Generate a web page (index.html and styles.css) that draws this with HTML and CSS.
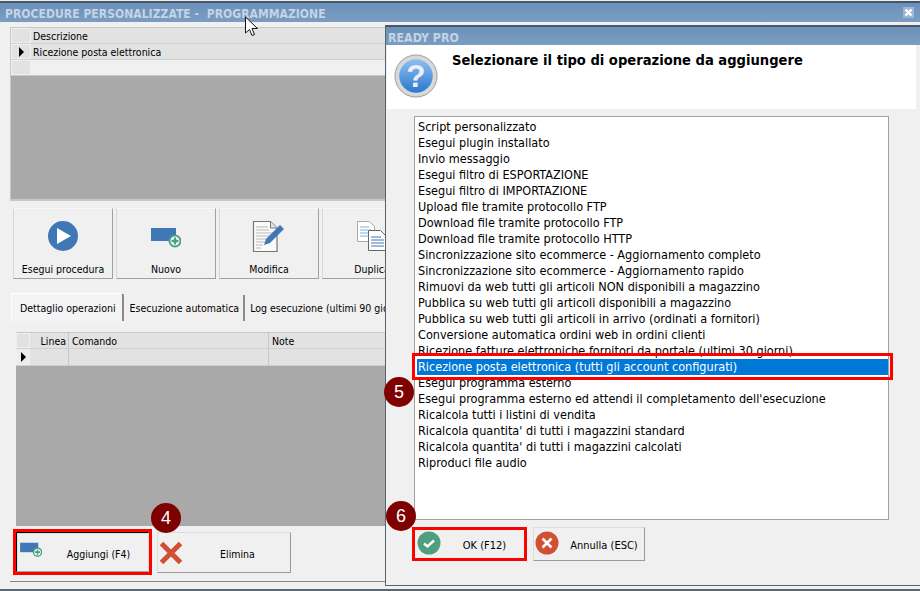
FILE: index.html
```html
<!DOCTYPE html>
<html lang="it">
<head>
<meta charset="utf-8">
<title>Procedure personalizzate</title>
<link rel="stylesheet" href="styles.css">
</head>
<body>
<svg width="0" height="0" class="defs">
  <defs>
    <symbol id="add" viewBox="0 0 30 22">
      <rect x="0" y="1" width="25" height="13" fill="#3f78b5"/>
      <circle cx="24" cy="14" r="5.500" fill="#fff" stroke="#4d9f85" stroke-width="2"/>
      <path d="M24 10.500v7M20.500 14h7" stroke="#4d9f85" stroke-width="2.400"/>
    </symbol>
  </defs>
</svg>
<main class="win">
  <header class="titlebar"><span>PROCEDURE PERSONALIZZATE -  PROGRAMMAZIONE</span><span class="close"><svg width="11" height="11" viewBox="0 0 11 11"><path d="M2.500 2.500l6 6M8.500 2.500l-6 6" stroke="#fff" stroke-width="2.400"/></svg></span></header>
  <div class="body">
    <section class="grid top">
      <div class="row head"><i class="sel"></i><span>Descrizione</span></div>
      <div class="row cur"><i class="sel"><b class="arrow"></b></i><span>Ricezione posta elettronica</span></div>
      <div class="row new"><i class="sel"></i></div>
    </section>
    <nav class="tools">
      <button class="tool">
        <svg width="46" height="46" viewBox="0 0 46 46"><circle cx="23" cy="23" r="15" fill="#3f78b5"/><path d="M17 15v16l14-8z" fill="#fff"/></svg>
        <span>Esegui procedura</span>
      </button>
      <button class="tool">
        <svg class="addicon" width="30" height="22"><use href="#add"/></svg>
        <span>Nuovo</span>
      </button>
      <button class="tool">
        <svg width="46" height="46" viewBox="0 0 46 46"><path d="M7.500 8.500h17l6.500 6.500v23.500H7.500z" fill="#fafafa" stroke="#777" stroke-width="1.200"/><path d="M24.500 8.500v6.500h6.500" fill="#e4e4e4" stroke="#777"/><path d="M10 14h12M10 17h13M10 20h17M10 23h15M10 26h12M10 29h9M10 32h7M10 35h5" stroke="#b8b8b8"/><path d="M18 32l2-6 14-14 4 4-14 14z" fill="#3f78b5"/></svg>
        <span>Modifica</span>
      </button>
      <button class="tool">
        <svg width="46" height="46" viewBox="0 0 46 46"><path d="M8.500 8.500h12l5 5v15h-17z" fill="#fff" stroke="#aaa"/><path d="M11 14h9M11 17h11M11 20h11M11 23h8" stroke="#7eb0e0"/><path d="M19.500 17.500h12l5 5v15h-17z" fill="#fff" stroke="#666"/><path d="M22 24h10M22 27h13M22 30h13M22 33h13" stroke="#3f78b5"/></svg>
        <span>Duplica</span>
      </button>
    </nav>
    <section class="tabs">
      <div class="tabstrip">
        <span class="tab on">Dettaglio operazioni</span>
        <span class="tab auto">Esecuzione automatica</span>
        <span class="tab log">Log esecuzione (ultimi 90 giorni)</span>
      </div>
      <div class="pane">
        <div class="grid lower">
          <div class="row head"><i class="sel"></i><span class="c1">Linea</span><span class="c2">Comando</span><span class="c3">Note</span></div>
          <div class="row blank"><i class="sel"><b class="arrow"></b></i><span class="c1"></span><span class="c2"></span><span></span></div>
        </div>
        <div class="actions">
          <button class="act hot"><svg class="smalladd" width="22" height="16"><use href="#add"/></svg><span>Aggiungi (F4)</span></button>
          <button class="act del"><svg width="26" height="26" viewBox="0 0 26 26"><path d="M3.500 3.500l19 19M22.500 3.500l-19 19" stroke="#d14f33" stroke-width="5"/></svg><span>Elimina</span></button>
        </div>
      </div>
    </section>
  </div>
</main>

<aside class="dialog">
  <header class="dtitle">READY PRO</header>
  <div class="dhead">
    <svg width="44" height="44" viewBox="0 0 46 46">
      <defs><linearGradient id="q" x1="0" y1="0" x2="0" y2="1"><stop offset="0" stop-color="#8cc0ee"/><stop offset="1" stop-color="#2a78cf"/></linearGradient></defs>
      <circle cx="23" cy="23" r="22" fill="#d8d8d8" stroke="#999"/>
      <circle cx="23" cy="23" r="17.500" fill="url(#q)"/>
      <text x="23" y="34" text-anchor="middle" class="qmark">?</text>
    </svg>
    <h1>Selezionare il tipo di operazione da aggiungere</h1>
  </div>
  <div class="dbody">
    <ul class="list">
      <li>Script personalizzato</li>
      <li>Esegui plugin installato</li>
      <li>Invio messaggio</li>
      <li>Esegui filtro di ESPORTAZIONE</li>
      <li>Esegui filtro di IMPORTAZIONE</li>
      <li>Upload file tramite protocollo FTP</li>
      <li>Download file tramite protocollo FTP</li>
      <li>Download file tramite protocollo HTTP</li>
      <li>Sincronizzazione sito ecommerce - Aggiornamento completo</li>
      <li>Sincronizzazione sito ecommerce - Aggiornamento rapido</li>
      <li>Rimuovi da web tutti gli articoli NON disponibili a magazzino</li>
      <li>Pubblica su web tutti gli articoli disponibili a magazzino</li>
      <li>Pubblica su web tutti gli articoli in arrivo (ordinati a fornitori)</li>
      <li>Conversione automatica ordini web in ordini clienti</li>
      <li>Ricezione fatture elettroniche fornitori da portale (ultimi 30 giorni)</li>
      <li class="picked">Ricezione posta elettronica (tutti gli account configurati)</li>
      <li>Esegui programma esterno</li>
      <li>Esegui programma esterno ed attendi il completamento dell'esecuzione</li>
      <li>Ricalcola tutti i listini di vendita</li>
      <li>Ricalcola quantita' di tutti i magazzini standard</li>
      <li>Ricalcola quantita' di tutti i magazzini calcolati</li>
      <li>Riproduci file audio</li>
    </ul>
    <div class="dactions">
      <button class="act ok"><svg width="24" height="24" viewBox="0 0 24 24"><circle cx="12" cy="12" r="11.500" fill="#4d9f7d"/><path d="M7 12.500l3.500 3L17 9.500" fill="none" stroke="#fff" stroke-width="2.400"/></svg><span>OK (F12)</span></button>
      <button class="act cancel"><svg width="24" height="24" viewBox="0 0 24 24"><circle cx="12" cy="12" r="11.500" fill="#d14f33"/><path d="M7.500 7.500l9 9M16.500 7.500l-9 9" stroke="#fff" stroke-width="2.600"/></svg><span>Annulla (ESC)</span></button>
    </div>
  </div>
</aside>

<div class="mark box-row"></div>
<div class="mark n4">4</div>
<div class="mark n5">5</div>
<div class="mark n6">6</div>
<svg class="mark cursor" width="16" height="22" viewBox="0 0 16 22"><path d="M1.500 1v16l4-3.500 2.500 6 2.500-1-2.500-6h5.500z" fill="#fff" stroke="#111"/></svg>
</body>
</html>
```
FILE: styles.css
```css
* { box-sizing: border-box; }
html, body { margin: 0; padding: 0; }
body {
  width: 920px; height: 591px; overflow: hidden; position: relative;
  font: 10.5px/16px "DejaVu Sans", "Noto Sans", sans-serif; font-stretch: condensed;
  color: #000; background: #f0f0f0;
}
.defs { position: absolute; }
button { font: inherit; font-stretch: inherit; color: inherit; padding: 0; }

.win { width: 920px; height: 591px; padding-top: 1px; border-bottom: 2px solid #5a6672; display: flex; flex-direction: column; }
.titlebar {
  height: 21px; flex: none; border-top: 2px solid #46566a;
  background: linear-gradient(#6b91b9, #7b9dc2);
  color: #c3d4e6; font-weight: bold; font-size: 12px; letter-spacing: .05px; line-height: 22px;
  padding: 0 4px 0 5px; display: flex; justify-content: space-between; white-space: pre;
}
.close { width: 11px; height: 11px; margin: 4px 2px 0 0; background: #9db7d2; display: flex; }
.body { flex: 1; padding: 5px 0 0 10px; width: 385px; overflow: hidden; }

.grid { background: #a9a9a9; }
.top { width: 500px; height: 174px; border: 1px solid #c8c8c8; border-width: 1px 0 2px 1px; }
.row { display: flex; height: 16px; line-height: 16px; }
.sel { width: 20px; flex: none; display: flex; align-items: center; justify-content: center; background: #e2e2e2; border: 1px solid #f0f0f0; }
.row.head, .row.cur { background: #e2e2e2; border-bottom: 1px solid #d0d0d0; }
.row span { padding-left: 2px; }
.row.new { background: #f0f0f0; border-bottom: 1px solid #c8c8c8; }
.arrow { width: 0; height: 0; border-left: 5px solid #000; border-top: 5px solid transparent; border-bottom: 5px solid transparent; }

.tools { display: flex; gap: 3px; margin: 7px 0 0 3px; width: 500px; }
.tool {
  width: 100px; height: 71px; flex: none; background: #f0f0f0; border: 1px solid; border-color: #f8f8f8 #a0a0a0 #a0a0a0 #d8d8d8;
  display: flex; flex-direction: column; align-items: center; justify-content: space-between; padding: 4px 0 1px;
}
.addicon { margin-top: 14px; }

.tabs { margin: 14px 0 0 1px; width: 500px; }
.tabstrip { display: flex; height: 28px; align-items: flex-end; white-space: nowrap; }
.tab { height: 26px; line-height: 26px; border-right: 2px solid #8a8a8a; }
.tab.on { height: 28px; line-height: 28px; padding: 0 6px 0 8px; background: #f4f4f4; border-top: 1px solid #fff; border-left: 1px solid #fff; border-radius: 3px 3px 0 0; }
.tab.auto { padding: 0 4px 0 6px; }
.tab.log { padding: 0 4px 0 5px; border: 0; }
.pane { margin-left: -1px; padding: 11px 0 0 6px; height: 261px; display: flex; flex-direction: column; border-bottom: 1px solid #808890; }
.lower { height: 194px; flex: none; border-top: 1px solid #c8c8c8; }
.lower .row { background: #e2e2e2; border-bottom: 1px solid #cfcfcf; }
.lower .blank { height: 17px; }
.lower .sel { width: 14px; }
.lower .c1 { width: 39px; text-align: right; padding-right: 2px; border-right: 1px solid #c8c8c8; }
.lower .c2 { width: 200px; padding-left: 3px; border-right: 1px solid #c8c8c8; }
.lower .c3 { padding-left: 3px; }
.lower .blank .sel { background: #ececec; }

.actions { display: flex; gap: 8px; margin-top: 6px; align-items: flex-start; }
.act {
  height: 41px; background: #f0f0f0; border: 1px solid; border-color: #dcdcdc #9a9a9a #9a9a9a #dcdcdc;
  display: flex; align-items: center; flex: none;
}
.act span { flex: 1; text-align: center; }
.hot { width: 133px; height: 40px; outline: 3px solid #f00; border-color: #000 #d8d8d8 #a0a0a0 #000; box-shadow: inset 1px 1px 0 #dcdcdc; }
.hot span { padding: 3px 0 0 7px; }
.smalladd { margin: -4px 0 0 3px; }
.del { width: 134px; }
.del span { padding: 2px 0 0 1px; }

.dialog {
  position: absolute; left: 385px; top: 25px; width: 535px; height: 561px;
  border: 1px solid #56626e; border-right: 0; border-top: 2px solid #46566a; background: #f0f0f0;
  display: flex; flex-direction: column;
}
.dtitle { height: 18px; flex: none; background: linear-gradient(#6b91b9, #7b9dc2); color: #c3d4e6; font-weight: bold; font-size: 12.3px; line-height: 22px; padding-left: 2px; overflow: hidden; }
.dhead { height: 64px; flex: none; background: #fff; display: flex; margin: 0 4px 0 1px; padding: 9px 0 0 7px; }
.dhead svg { flex: none; }
.dhead h1 { margin: -3px 0 0 14px; font-size: 14.6px; line-height: 18px; font-weight: bold; }
.qmark { font: bold 33px "Liberation Sans", sans-serif; fill: #e9eefc; }
.dbody { flex: 1; padding: 7px 0 0 28px; }
.list { list-style: none; margin: 0; padding: 2px 0 2px 2px; width: 475px; height: 404px; background: #fff; border: 1px solid #a0a0a0; font-size: 12.55px; }
.list li { height: 16px; line-height: 16px; padding-left: 1px; white-space: nowrap; }
.picked { background: #0078d7; color: #fff; }
.dactions { display: flex; gap: 6px; margin-top: 7px; }
.ok, .cancel { font-size: 11px; height: 34px; }
.act.ok span, .act.cancel span { padding-top: 3px; }
.ok { width: 115px; margin-left: -2px; outline: 3px solid #f00; outline-offset: -3px; }
.ok svg { margin: -2px 0 0 4px; }
.act.ok span { padding-left: 2px; }
.cancel { width: 112px; }
.cancel svg { margin: -2px 0 0 1px; }
.act.cancel span { padding-left: 5px; }

.mark { position: absolute; }
.box-row { left: 412px; top: 353px; width: 481px; height: 27px; border: 3px solid #f00; }
.n4, .n5, .n6 { width: 30px; height: 30px; border-radius: 50%; background: #7f0000; color: #fff; text-align: center; font: 18px/30px "Liberation Sans", sans-serif; }
.n4 { left: 151px; top: 503px; }
.n5 { left: 384px; top: 377px; }
.n6 { left: 386px; top: 501px; }
.cursor { left: 244px; top: 16px; }
```
